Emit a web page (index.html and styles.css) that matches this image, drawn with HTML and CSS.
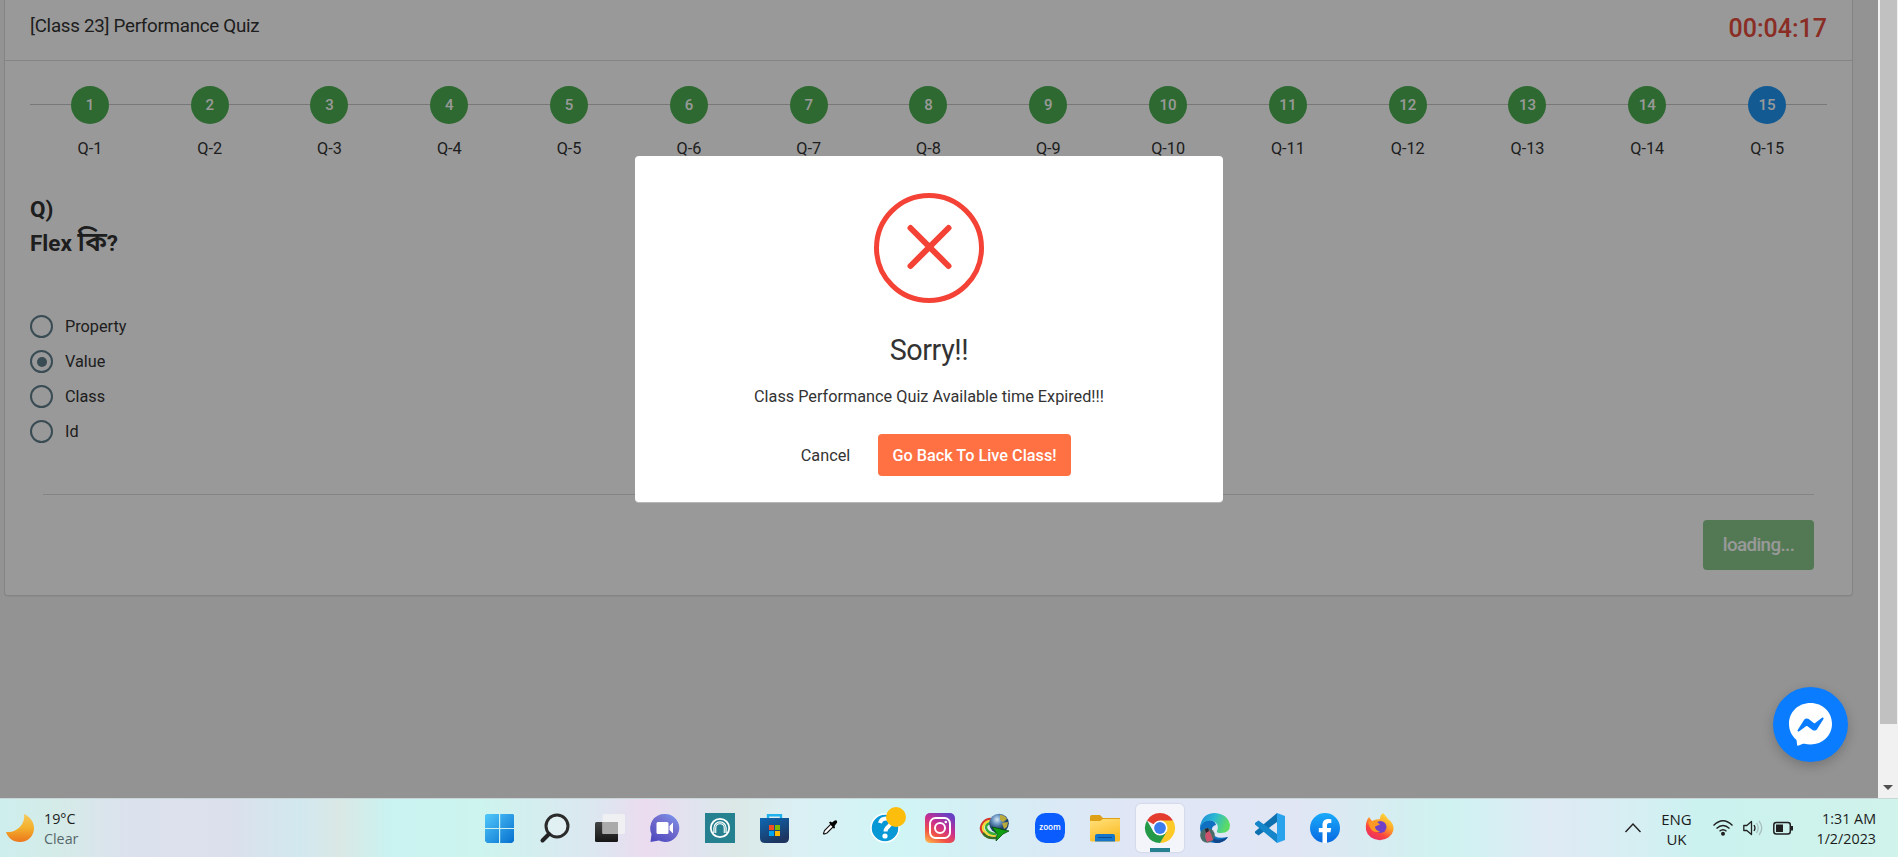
FILE: index.html
```html
<!DOCTYPE html>
<html lang="en">
<head>
<meta charset="utf-8">
<title>Performance Quiz</title>
<link rel="stylesheet" href="styles.css">
</head>
<body>
<div class="viewport">
  <div class="page">
    <main class="card">
      <header class="card-head">
        <h1 class="title">[Class 23] Performance Quiz</h1>
        <span class="timer">00:04:17</span>
      </header>
      <ol class="steps">
        <li class="step"><span class="dot">1</span><span>Q-1</span></li>
        <li class="step"><span class="dot">2</span><span>Q-2</span></li>
        <li class="step"><span class="dot">3</span><span>Q-3</span></li>
        <li class="step"><span class="dot">4</span><span>Q-4</span></li>
        <li class="step"><span class="dot">5</span><span>Q-5</span></li>
        <li class="step"><span class="dot">6</span><span>Q-6</span></li>
        <li class="step"><span class="dot">7</span><span>Q-7</span></li>
        <li class="step"><span class="dot">8</span><span>Q-8</span></li>
        <li class="step"><span class="dot">9</span><span>Q-9</span></li>
        <li class="step"><span class="dot">10</span><span>Q-10</span></li>
        <li class="step"><span class="dot">11</span><span>Q-11</span></li>
        <li class="step"><span class="dot">12</span><span>Q-12</span></li>
        <li class="step"><span class="dot">13</span><span>Q-13</span></li>
        <li class="step"><span class="dot">14</span><span>Q-14</span></li>
        <li class="step current"><span class="dot">15</span><span>Q-15</span></li>
      </ol>
      <div class="question">Q)<br>Flex <span class="bengali" lang="bn">কি</span>?</div>
      <div class="options">
        <div class="option"><span class="radio"></span>Property</div>
        <div class="option"><span class="radio checked"></span>Value</div>
        <div class="option"><span class="radio"></span>Class</div>
        <div class="option"><span class="radio"></span>Id</div>
      </div>
      <footer class="card-foot"><button class="next">loading...</button></footer>
    </main>
  </div>
  <div class="scrollbar"><div class="thumb"></div><div class="arrow"></div></div>
  <div class="overlay">
    <section class="modal">
      <svg class="error" viewBox="0 0 110 110"><circle cx="55" cy="55" r="52.5" fill="none" stroke="#f44336" stroke-width="5"/><path d="M36.5 35 74.500 73M74.500 35 36.500 73" stroke="#f44336" stroke-width="6" stroke-linecap="round"/></svg>
      <h2 class="modal-title">Sorry!!</h2>
      <p class="modal-text">Class Performance Quiz Available time Expired!!!</p>
      <div class="actions"><button class="cancel">Cancel</button><button class="confirm">Go Back To Live Class!</button></div>
    </section>
  </div>
  <div class="messenger">
    <svg width="43" height="43" viewBox="0 0 43 43"><path fill="#fff" d="M21.500 0C9.200 0 0 8.900 0 20.800c0 6.500 2.700 12 7 15.700.5.500.6 1 .7 1.500l.3 3.500c.1 1 .9 1.500 1.700 1.100l4.300-1.800c.5-.2 1-.2 1.500-.1 1.900.5 3.900.8 6 .8C33.800 41.500 43 32.600 43 20.800S33.800 0 21.500 0Z"/><path fill="#0a7cff" d="m8.700 27 6.300-10c1-1.600 3.200-2 4.700-.9l5 3.800c.5.300 1.100.3 1.500 0l6.800-5.100c.9-.7 2.100.4 1.500 1.300l-6.300 10c-1 1.600-3.200 2-4.700.9l-5-3.800c-.5-.3-1.100-.3-1.500 0l-6.800 5.100c-.9.700-2.100-.4-1.500-1.300Z"/></svg>
  </div>
</div>
<div class="taskbar">
  <div class="weather">
    <svg width="30" height="30" viewBox="0 0 30 30"><defs><linearGradient id="moon" x2="0" y2="1"><stop stop-color="#f7c95a"/><stop offset=".5" stop-color="#f3b02c"/><stop offset="1" stop-color="#ec761c"/></linearGradient></defs><path fill="url(#moon)" d="M19 1c1.500 9-6 19-18 18 2 6 7 10 14 10 8 0 14-6 14-14 0-6-4-11.500-10-14Z"/></svg>
    <div class="lines"><span>19°C</span><span class="muted">Clear</span></div>
  </div>
  <nav class="apps">
    <span class="app"><svg viewBox="0 0 30 30"><defs><linearGradient id="win" x2="1" y2="1"><stop stop-color="#50c8fb"/><stop offset="1" stop-color="#0670cf"/></linearGradient></defs><path fill="url(#win)" d="M0 2 2 1h12v14H0zM15.200 1H28l1 1v13H15.200zM0 16h14v14H2l-2-2zM15.200 16H29v12l-2 2H15.200z"/></svg></span>
    <span class="app"><svg viewBox="0 0 30 30"><circle cx="17" cy="13" r="11" fill="#fff" fill-opacity=".25" stroke="#2b2b2b" stroke-width="3"/><path d="m9 21-6.500 6.500" stroke="#222" stroke-width="4" stroke-linecap="round"/></svg></span>
    <span class="app"><svg viewBox="0 0 30 30"><defs><linearGradient id="tv" x2="0" y2="1"><stop stop-color="#444"/><stop offset="1" stop-color="#161616"/></linearGradient></defs><rect y="9" width="23" height="20" rx="1.500" fill="url(#tv)"/><rect x="7.500" y="1" width="22.500" height="20" rx="1.500" fill="#f1f1f1" fill-opacity=".9"/><path d="M7.500 9H23v12H7.500z" fill="#aaa"/></svg></span>
    <span class="app"><svg viewBox="0 0 30 30"><defs><linearGradient id="chat" x1=".9" y1="0" x2=".2" y2="1"><stop stop-color="#7897ee"/><stop offset=".4" stop-color="#7470cf"/><stop offset="1" stop-color="#4f4bbf"/></linearGradient></defs><path fill="url(#chat)" d="M15 1a14 14 0 1 1-6 26.500L.5 29l1-8A14 14 0 0 1 15 1Z"/><rect x="6.500" y="9" width="12" height="12" rx="1.500" fill="#fff"/><path fill="#fff" d="m19.500 13 3.500-3.500v11l-3.500-3.500z"/></svg></span>
    <span class="app"><svg viewBox="0 0 30 30"><path fill="#25818f" d="M0 0h30v30H0z"/><circle cx="15" cy="15" r="9.200" fill="none" stroke="#fff" stroke-width="1.800"/><path d="M9.800 20v-5a5.200 5.200 0 0 1 10.400 0v5" fill="none" stroke="#fff" stroke-width="3"/><path d="M9.800 21v-6a5.200 5.200 0 0 1 10.400 0v6" fill="none" stroke="#25818f" stroke-width=".6"/></svg></span>
    <span class="app"><svg viewBox="0 0 30 30"><defs><linearGradient id="store" x2=".5" y2="1"><stop stop-color="#0d68b4"/><stop offset="1" stop-color="#1d355f"/></linearGradient></defs><path d="M8 7V2.200h13V7" fill="none" stroke="#1fb2ee" stroke-width="2.400"/><path fill="url(#store)" d="M0 5h29v20q0 5-5 5H5q-5 0-5-5z"/><path fill="#f25022" d="M9 12h5v5H9z"/><path fill="#7fba00" d="M15 12h5v5h-5z"/><path fill="#00a4ef" d="M9 18h5v5H9z"/><path fill="#ffb900" d="M15 18h5v5h-5z"/></svg></span>
    <span class="app"><svg viewBox="0 0 30 30"><path d="m8.500 20.500 1-3 6.500-6.500 2.500 2.500-6.500 6.500-3 1Z" fill="#fff" stroke="#111" stroke-width="1.100"/><path d="m14 9.500 1.500-1 1.500 1 2-1.500q2-1.500 3 0 .8 1.500-1 3l-1.500 2 .5 1.500-1 1.200z" fill="#000"/></svg></span>
    <span class="app"><svg viewBox="0 0 30 30"><circle cx="15" cy="15" r="14" fill="#0898d6" stroke="#fff" stroke-width="1.500"/><path d="M10 10q1-4.500 6-4.500t5 4c0 4-5.500 4-5.500 9" fill="none" stroke="#fff" stroke-width="4"/><circle cx="15" cy="23" r="2.600" fill="#fff"/><circle cx="26" cy="4" r="10" fill="#fdbd0c"/></svg></span>
    <span class="app"><svg viewBox="0 0 30 30"><defs><linearGradient id="insta" x1=".1" y1="1" x2=".7" y2="0"><stop stop-color="#fdb54b"/><stop offset=".3" stop-color="#f15245"/><stop offset=".62" stop-color="#c92d90"/><stop offset="1" stop-color="#6840c4"/></linearGradient></defs><rect width="30" height="30" rx="5" fill="url(#insta)"/><rect x="5" y="5" width="20" height="20" rx="5.500" fill="none" stroke="#fff" stroke-width="2"/><circle cx="15" cy="15" r="5" fill="none" stroke="#fff" stroke-width="2"/><circle cx="20.800" cy="9" r="1.300" fill="#fff"/></svg></span>
    <span class="app"><svg viewBox="0 0 30 30"><defs><radialGradient id="globe" cx=".4" cy=".3"><stop stop-color="#d6e8f2"/><stop offset=".45" stop-color="#6e98c4"/><stop offset="1" stop-color="#1d3f68"/></radialGradient></defs><g fill="none" stroke-width="2.300"><path d="M11 6C3 6-1 14 2 19s9 7 14 5" stroke="#d4362b"/><path d="M11 8C5 8 1 14 4 18s7 5 12 4.500" stroke="#f2d735"/><path d="M11 10c-5 1-6 4-4 7s5 4 9 4" stroke="#35a93a"/><path d="M3 20q4 6 13 5" stroke="#356f28"/></g><circle cx="19" cy="10.500" r="9.800" fill="url(#globe)"/><path d="M20 2q5 0 7 4l-4 3-3-2zM22 10l6-1-1 5-3 2z" fill="#b9aa3c"/><path fill="#0ea012" stroke="#074d09" stroke-width=".8" d="m12 14 17 4-6 3-7 7 1-7z"/></svg></span>
    <span class="app"><svg viewBox="0 0 30 30"><rect width="30" height="30" rx="10.500" fill="#0b5cff"/><text class="zoom-mark" x="15" y="17.300" text-anchor="middle" textLength="21.500" lengthAdjust="spacingAndGlyphs">zoom</text></svg></span>
    <span class="app"><svg viewBox="0 0 30 30"><defs><linearGradient id="folder" x2=".4" y2="1"><stop stop-color="#ffe07a"/><stop offset="1" stop-color="#fbbd29"/></linearGradient></defs><path fill="#dda016" d="M0 4q0-2 2-2h8l3 3h17v7H0z"/><path fill="url(#folder)" d="M0 8h10l3-2h17v21q0 1.500-1.500 1.500h-27Q0 28.500 0 27z"/><path fill="#1576c9" d="M5 28.500V23q0-2 2-2h16q2 0 2 2v5.500z"/><path stroke="#0b4c94" d="M8 24.500h14"/></svg></span>
    <span class="app active"><svg viewBox="0 0 30 30"><path fill="#e33b2e" d="M2 7.500a15 15 0 0 1 26 0L15 15z"/><path fill="#fdc926" d="M28 7.500A15 15 0 0 1 15 30l6.500-15L15 7.500z"/><path fill="#249a48" d="M2 7.500A15 15 0 0 0 15 30l6.500-11L8.500 18.700z"/><circle cx="15" cy="15" r="7.500" fill="#fff"/><circle cx="15" cy="15" r="5.900" fill="#3b7ded"/></svg></span>
    <span class="app"><svg viewBox="0 0 30 30"><defs><linearGradient id="edge" x2="1" y2=".3"><stop stop-color="#1d86d8"/><stop offset=".5" stop-color="#2bb7d4"/><stop offset="1" stop-color="#5bdb64"/></linearGradient></defs><path fill="#0f6fc0" d="M0 15Q1 7 8 7q7 0 8 5-5 1-4 7 2 8 16 5-4 6-13 6Q1 29 0 15Z"/><path fill="#12468a" d="M11 17q-1 6 4 9 5 2 13-2-4 6-12 6-8-3-7-9z"/><path fill="url(#edge)" d="M0 14Q2 0 15 0q13 1 15 12 0 8-9 8-5 0-4-2 3-7-4-10Q5 6 0 14Z"/><circle cx="7.500" cy="22.500" r="7.300" fill="#486c69"/><path fill="#cf526c" d="m6 18 3-1 2 4 2 6-6 2-2-5z"/><path fill="#2b2430" d="m5 16 3-1 1 3-3 2z"/></svg></span>
    <span class="app"><svg viewBox="0 0 30 30"><path fill="#0f70b0" d="m22 0v9L3.500 22.500 0 20v-1.500z"/><path fill="#1686ca" d="M22 30v-9L3.500 7.500 0 10v1.500z"/><path fill="#2aa2ec" d="m22 0 8 3v24l-8 3z"/></svg></span>
    <span class="app"><svg viewBox="0 0 30 30"><defs><linearGradient id="fb" x2="0" y2="1"><stop stop-color="#19aafb"/><stop offset="1" stop-color="#0768e1"/></linearGradient></defs><circle cx="15" cy="15" r="15" fill="url(#fb)"/><path fill="#fff" d="M12.500 30V19.300H8.800V15h3.700v-3c0-4 2.300-6 5.800-6l3 .3V10h-2c-1.700 0-2.300 1-2.300 2.300V15h4.200l-.7 4.300H17V30z"/></svg></span>
    <span class="app"><svg viewBox="0 0 30 30"><defs><linearGradient id="fox" x1=".8" x2=".2" y2="1"><stop stop-color="#ffe33f"/><stop offset=".4" stop-color="#ffa229"/><stop offset=".7" stop-color="#fb4340"/><stop offset="1" stop-color="#e52a70"/></linearGradient></defs><path fill="url(#fox)" d="M18 0q3 3 5 6 6 4 5.500 11A14 12.500 0 0 1 1 17Q0 9 4 4l3 4q4-2 8-2 0-4 3-6Z"/><circle cx="15.500" cy="14" r="6" fill="#7041c8"/><path fill="#ff9825" d="M3 9q5-2 9 0l3 2.500-5 2q0 4 5 5-7 2-10-4z"/></svg></span>
  </nav>
  <div class="tray">
    <svg width="18" height="18" viewBox="0 0 18 18"><path d="m1.500 13 7.500-8 7.500 8" fill="none" stroke="#202020" stroke-width="1.400"/></svg>
    <div class="lines lang"><span>ENG</span><span>UK</span></div>
    <div class="status">
      <svg width="20" height="18" viewBox="0 0 20 18"><g fill="none" stroke="#202020" stroke-width="1.400"><path d="M.5 6.500Q10-3 19.500 6.500M3.500 9.500q6.500-6 13 0M6.500 12.300q3.500-3 7 0"/></g><circle cx="10" cy="14.700" r="2" fill="#202020"/></svg>
      <svg width="20" height="18" viewBox="0 0 20 18"><g fill="none" stroke="#202020" stroke-width="1.300" stroke-linejoin="round"><path d="M.8 6.500v5h3L8.500 15.500v-13L3.800 6.500zM11 6q2 3 0 6"/><path d="M13.500 4q3.500 5 0 10M16 2q5.500 7 0 14" stroke="#a8bfbf"/></g></svg>
      <svg width="20" height="18" viewBox="0 0 20 18"><rect x=".8" y="3.500" width="16.500" height="11.500" rx="2.500" fill="none" stroke="#202020" stroke-width="1.500"/><path d="M3 5.500h7v7.500H3zM17.500 7H20v4.500h-2.500z" fill="#202020"/></svg>
    </div>
    <div class="lines clock"><span>1:31 AM</span><span>1/2/2023</span></div>
  </div>
</div>
</body>
</html>
```
FILE: styles.css
```css
* { box-sizing: border-box; }
body {
  margin: 0;
  height: 857px;
  display: grid;
  grid-template-rows: 798px 59px;
  overflow: hidden;
  font-family: Roboto, "Noto Sans Bengali", sans-serif;
  font-size: 16.25px;
  line-height: 25px;
  color: #333;
}
button { font: inherit; border: 0; padding: 0; }

.viewport { position: relative; display: flex; overflow: hidden; }
.page { flex: 1; background: #f5f5f5; padding: 0 25px 0 4px; }
.card {
  height: 596px;
  background: #fff;
  border: 1px solid #ddd;
  border-top: 0;
  border-radius: 0 0 4px 4px;
  box-shadow: 0 1px 1px rgba(0, 0, 0, .05);
}
.card-head {
  height: 61px;
  padding: 0 25px 6px;
  border-bottom: 1px solid #ddd;
  display: flex;
  justify-content: space-between;
  align-items: center;
}
.title { margin: 0; padding-bottom: 1px; font-size: 18.75px; font-weight: 400; letter-spacing: -.28px; }
.timer { font-size: 25px; font-weight: 500; color: #e74c3c; padding-top: 3px; }

.steps {
  list-style: none;
  margin: 25px 25px 0;
  padding: 0;
  display: grid;
  grid-template-columns: repeat(15, 1fr);
  background: linear-gradient(#c8c8c8, #c8c8c8) 0 18px / 100% 1px no-repeat;
}
.step { display: flex; flex-direction: column; align-items: center; gap: 12px; }
.dot {
  width: 38px;
  height: 38px;
  border-radius: 50%;
  background: #4caf50;
  color: #fff;
  font-size: 15px;
  line-height: 38px;
  text-align: center;
  font-weight: 500;
}
.current .dot { background: #2196f3; }

.question { margin: 32px 25px 0; font-size: 22.5px; line-height: 33.5px; font-weight: 700; height: 67px; }
.bengali { font-size: 27px; line-height: 1; font-weight: 600; }
.options { margin: 54px 25px 0; display: grid; gap: 10px; }
.option { display: flex; align-items: center; gap: 12px; height: 25px; }
.radio { width: 23px; height: 23px; border: 2px solid #607d8b; border-radius: 50%; display: grid; place-items: center; }
.checked::after { content: ""; width: 10px; height: 10px; border-radius: 50%; background: #607d8b; }
.card-foot { margin: 50px 38px 0; padding-top: 25px; border-top: 1px solid #ddd; display: flex; justify-content: flex-end; }
.next { width: 111px; height: 50px; border-radius: 4px; background: #4caf50; color: #fff; opacity: .65; font-size: 18.75px; font-weight: 500; letter-spacing: -.6px; }

.scrollbar { width: 20px; background: #f1f1f1; padding: 0 2px; display: flex; flex-direction: column; justify-content: space-between; align-items: center; z-index: 2; }
.thumb { width: 17px; height: 724px; background: #c1c1c1; }
.arrow { border: 5px solid transparent; border-top-color: #505050; border-bottom: 0; margin-bottom: 8px; }

.overlay { position: absolute; inset: 0 20px 0 0; background: rgba(0, 0, 0, .4); padding-top: 156px; }
.modal {
  width: 588px;
  height: 346px;
  margin: 0 auto 0 635px;
  padding-top: 37px;
  border-radius: 4px;
  background: #fff;
  box-shadow: 0 1px 0 rgba(255, 255, 255, .3);
  display: flex;
  flex-direction: column;
  align-items: center;
}
.error { width: 110px; height: 110px; }
.modal-title { margin: 27px 0 0; font-size: 28.75px; line-height: 40px; font-weight: 400; letter-spacing: -.43px; }
.modal-text { margin: 14px 0 0; }
.actions { margin-top: 25px; display: flex; padding-right: 14px; }
.cancel { width: 105px; height: 42px; background: none; color: #333; }
.confirm { width: 193px; height: 42px; border-radius: 4px; background: #ff7043; color: #fff; font-weight: 500; }

.messenger {
  position: absolute;
  right: 50px;
  bottom: 36px;
  width: 75px;
  height: 75px;
  border-radius: 50%;
  background: #0a7cff;
  box-shadow: 0 4px 12px rgba(0, 0, 0, .2);
  display: grid;
  place-items: center;
}

.taskbar {
  display: grid;
  grid-template-columns: 472px 936px 1fr;
  border-top: 1px solid #c9d6d8;
  font-family: "Open Sans", sans-serif;
  font-size: 14.3px;
  line-height: 20px;
  color: #1c1c1c;
  background: linear-gradient(90deg, #cdeeed 0, #d5ebe8 60px, #dce1ee 130px, #dbe0ec 230px, #d2e8ef 300px, #dae8e5 340px, #c9f3f1 390px, #cdf4ee 480px, #dde6f0 600px, #ebdcef 645px, #dfe4ee 700px, #dbe8e6 735px, #dbeff3 790px, #d0f5f5 900px, #dae9f5 1060px, #e0e6f5 1130px, #e0e6f4 1300px, #d4eef0 1400px, #cff3f1 1450px, #dfeaf4 1550px, #d4eff2 1650px, #cbf2ef 1700px, #d0f3ea 1898px);
}
.weather { display: flex; align-items: center; padding-left: 5px; gap: 9px; }
.lines { display: flex; flex-direction: column; padding-top: 1px; }
.muted { color: #56676a; }
.apps { display: grid; grid-template-columns: repeat(17, 55px); align-items: center; }
.app { justify-self: center; width: 48px; height: 48px; display: grid; place-items: center; }
.app svg { width: 30px; height: 30px; overflow: visible; }
.active { background: linear-gradient(#25818f, #25818f) 50% 100% / 20px 4px no-repeat, rgba(255, 255, 255, .6); border-radius: 5px; box-shadow: 0 0 1px 1px rgba(120, 130, 160, .12); }
.zoom-mark { font: 600 8px "Open Sans", sans-serif; fill: #fff; }
.tray { display: flex; align-items: center; justify-content: flex-end; padding-right: 22px; }
.lang { width: 54px; margin-left: 7px; margin-right: 10px; text-align: center; font-size: 15px; }
.status { display: flex; gap: 10px; margin-right: 23px; }
.clock { text-align: right; white-space: nowrap; }
```
